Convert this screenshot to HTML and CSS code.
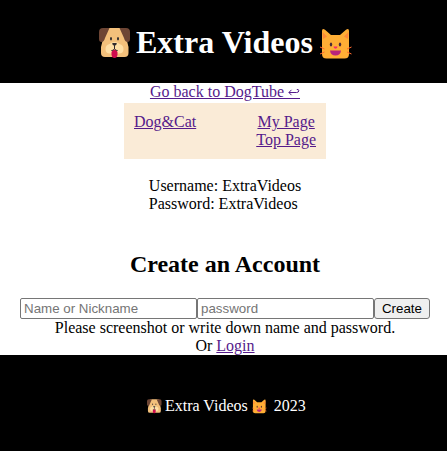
FILE: index.html
```html
<!DOCTYPE html>
<html lang="en">
<head>
<meta charset="utf-8">
<title>Extra Videos</title>
<link rel="stylesheet" href="styles.css">
</head>
<body>
<svg class="defs" aria-hidden="true">
  <symbol id="dog" viewBox="0 0 32 31">
    <path fill="#f3c07b" d="M8 0h15.500q4 1 4.500 6v7l1.500 6v6q0 4-4 4H6q-4 0-4-4v-6l1.500-6V6Q4 1 8 0z"/>
    <path fill="#ffdfa5" d="M15.500 14q3 0 5 2 4 1 4 5 0 4.500-4.500 4.500h-9q-4.500 0-4.500-4.500 0-4 4-5 2-2 5-2z"/>
    <path fill="#6d4534" d="M4 0h6.500L6 10q-1 4-3.500 4Q0 14 0 11V4q0-4 4-4zM27 0h-6.500L25 10q1 4 3.500 4 2.500 0 2.500-3V4q0-4-4-4z"/>
    <ellipse cx="12" cy="10.700" rx="1" ry="1.700" fill="#302b2d"/>
    <ellipse cx="19" cy="10.700" rx="1" ry="1.700" fill="#302b2d"/>
    <path fill="#302b2d" d="M13.300 15h4.400q.5 1.800-1.700 2.800V21h-1v-3.200q-2.200-1-1.700-2.800z"/>
    <path fill="#cf0b4e" d="M12.500 24q1-2.500 3-2.500t3 2.500v2.500q-.3 3.500-3 3.500t-3-3.500z"/>
    <path fill="none" stroke="#302b2d" stroke-width=".9" d="M12.300 22.500q2 .5 3.200-2 1.200 2.500 3.200 2"/>
  </symbol>
  <symbol id="cat" viewBox="0 0 32 30">
    <path fill="#ffae35" d="M2 2q0-3 3-1.300L11 6h9l6-5.300Q29-1 29 2v23q0 4.500-4.500 4.500h-18Q2 29.500 2 25z"/>
    <path fill="#ff8a3a" d="M2.500 3 7 7.500 3 10zM28.500 3 24 7.500 28 10z"/>
    <ellipse cx="11" cy="15.500" rx="1.200" ry="2" fill="#4b2b37"/>
    <ellipse cx="20" cy="15.500" rx="1.200" ry="2" fill="#4b2b37"/>
    <path fill="#f52b69" d="M13.500 17.500h4q0 2-2 2.300-2-.3-2-2.300z"/>
    <path fill="#b9247b" d="M10 21.500h11q-.5 5-5.500 5t-5.500-5z"/>
    <path fill="none" stroke="#ff692e" d="M0 18l4.500 2M0 25l4.500-2M31.500 18 27 20M31.500 25 27 23"/>
  </symbol>
</svg>
<header class="header">
  <h1 class="title">
    <svg class="dog"><use href="#dog"/></svg>
    <span>Extra Videos</span>
    <svg class="cat"><use href="#cat"/></svg>
  </h1>
</header>
<main class="main">
  <a href="#">Go back to DogTube <svg class="arrow" viewBox="0 0 12 11"><path d="M3.500.800.900 3.500l2.600 2.700M1 3.500h7.500q2.300 0 2.300-1.700T8.800.500"/><path d="M0 9.500h12"/></svg></a>
  <nav class="nav">
    <a href="#">Dog&amp;Cat</a>
    <div class="pages"><a href="#">My Page</a><a href="#">Top Page</a></div>
  </nav>
  <div class="credentials">Username: ExtraVideos<br>Password: ExtraVideos</div>
  <h2 class="heading">Create an Account</h2>
  <form class="form">
    <input class="field" type="text" placeholder="Name or Nickname"><input class="field" type="text" placeholder="password"><button class="create" type="button">Create</button>
  </form>
  <div>Please screenshot or write down name and password.</div>
  <div>Or <a href="#">Login</a></div>
</main>
<footer class="footer">
  <svg class="dog"><use href="#dog"/></svg>
  <span>Extra Videos</span>
  <svg class="cat"><use href="#cat"/></svg>
  <span class="year">2023</span>
</footer>
</body>
</html>
```
FILE: styles.css
```css
html { overflow: hidden; background: #fff; }
body {
  width: 450px;
  height: 451px;
  margin: 0;
  display: flex;
  flex-direction: column;
  font: 16px/18px "Liberation Serif", serif;
  color: #000;
}
a { color: #551a8b; text-decoration: underline; }
.defs { position: absolute; width: 0; height: 0; }
.header { height: 83px; background: #000; color: #fff; }
.title {
  display: flex;
  align-items: flex-start;
  margin: 0;
  padding: 24px 0 0 99px;
  font-size: 32px;
  line-height: 37px;
}
.title .dog { width: 32px; height: 31px; margin: 4px 5px 0 0; }
.title .cat { width: 32px; height: 30px; margin: 5px 0 0 7px; }
.main {
  height: 272px;
  display: flex;
  flex-direction: column;
  align-items: center;
  text-align: center;
}
.arrow {
  width: 12px;
  height: 11px;
  vertical-align: -3px;
  fill: none;
  stroke: #551a8b;
  stroke-width: 1;
}
.nav {
  box-sizing: border-box;
  width: 202px;
  height: 56px;
  margin-top: 2px;
  padding: 10px;
  display: flex;
  justify-content: space-between;
  background: #faebd7;
}
.pages { display: flex; flex-direction: column; align-items: center; }
.credentials { margin-top: 18px; text-align: left; }
.heading { margin: 38px 0 20px; font-size: 24px; line-height: 27px; }
.form { display: flex; margin: 0; }
.field, .create {
  box-sizing: border-box;
  height: 21px;
  margin: 0;
  border: 1px solid #767676;
  font: 13.333px "Liberation Sans", sans-serif;
}
.field { width: 177px; padding: 1px 3px; border-radius: 2px; }
.field::placeholder { color: #757575; }
.create {
  width: 56px;
  padding: 0;
  border-radius: 3px;
  background: #efefef;
  color: #000;
}
.footer {
  box-sizing: border-box;
  height: 96px;
  padding: 42px 0 0 147px;
  display: flex;
  align-items: flex-start;
  background: #000;
  color: #fff;
}
.footer .dog { width: 15px; height: 15px; margin: 2px 3px 0 0; }
.footer .cat { width: 15px; height: 15px; margin: 2px 0 0 4px; }
.year { margin-left: 7px; }
```
